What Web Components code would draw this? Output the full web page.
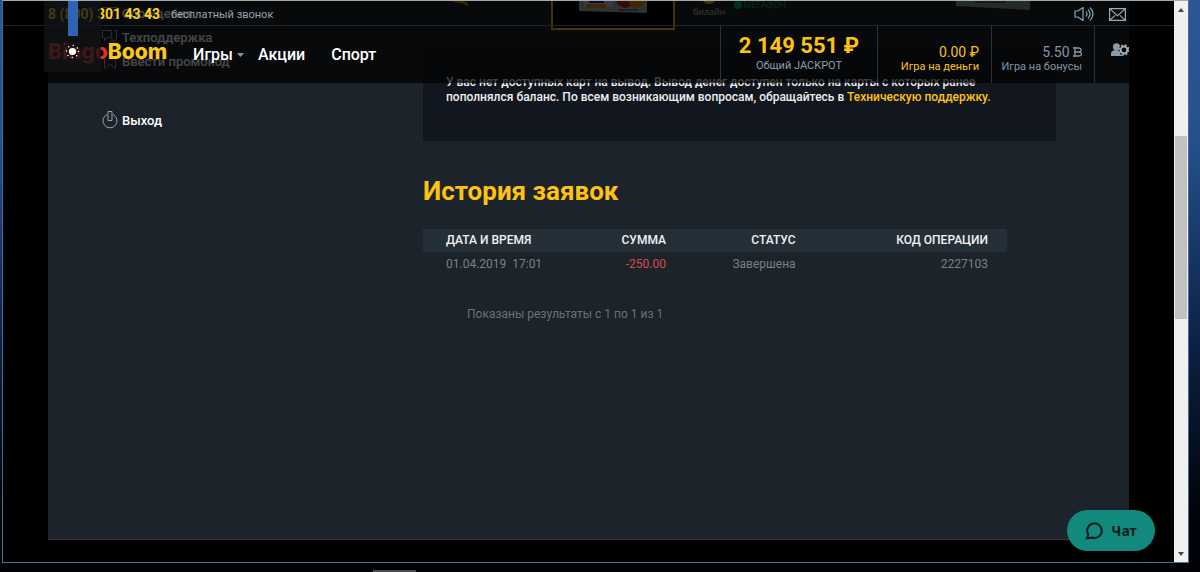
<!DOCTYPE html>
<html lang="ru">
<head>
<meta charset="utf-8">
<title>BingoBoom</title>
<style>
body{margin:0;background:#000;font-family:Roboto,"Open Sans",sans-serif;font-size:13px;line-height:15px;color:#fff}
</style>
</head>
<body>
<desktop-shell></desktop-shell>
<script>
const define = (name, html) => {
  const t = document.createElement('template');
  t.innerHTML = `<style>*{box-sizing:border-box}a{color:inherit;text-decoration:none}button{font:inherit;color:inherit;background:none;border:0;padding:0;cursor:pointer}svg{display:block;flex:none}</style>` + html;
  customElements.define(name, class extends HTMLElement {
    constructor(){ super(); this.attachShadow({mode:'open'}).appendChild(t.content.cloneNode(true)); }
  });
};

define('side-link', `
<style>
:host{display:block}
a{display:flex;align-items:center;gap:4px;height:24px;font-weight:500;font-size:13px}
::slotted(svg){display:block;flex:none}
</style>
<a href="#"><slot name="icon"></slot><slot></slot></a>`);

define('side-menu', `
<style>
:host{display:block;padding-left:54px}
side-link{color:#fff}
.exit{margin-top:35px}
svg{fill:none;stroke:#98a0a6;stroke-width:1}
</style>
<nav aria-label="Профиль">
<side-link><svg slot="icon" width="16" height="16" viewBox="0 0 16 16"><path d="M.5 2.5h15v11H.5zM.5 2.5 8 9l7.500-6.500"/></svg>Сообщения</side-link>
<side-link><svg slot="icon" width="16" height="16" viewBox="0 0 16 16"><path d="M.5 1.500h9v7h-4l-3 3v-3h-2zM11.500 1.500h3v8.500l-3 4v-3h-4"/></svg>Техподдержка</side-link>
<side-link><svg slot="icon" width="16" height="16" viewBox="0 0 16 16"><path d="M2.500.5h11v15L8 11l-5.500 4.500z"/></svg>Ввести промокод</side-link>
<side-link class="exit"><svg slot="icon" width="16" height="18" viewBox="0 0 16 18"><path d="M5 3.500a7 7 0 1 0 6 0M6 .5h4v9H6z"/></svg>Выход</side-link>
</nav>`);

define('pay-methods', `
<style>
:host{display:grid;grid-template-columns:repeat(5,1fr);gap:1px;height:47px;justify-items:center}
.pick{width:124px;height:29px;border:2px solid #ecb90c;border-top:0;background:#000;display:flex;justify-content:center;align-items:flex-start}
.group{display:flex;gap:8px;font-size:9px;line-height:10px;color:#c8c8c8}
.bee{display:flex;flex-direction:column;align-items:center;gap:3px;font-family:"Open Sans",sans-serif}
.mega{color:#00a659;display:flex;gap:2px;align-items:center;height:8px}
</style>
<svg width="80" height="20" viewBox="0 0 80 20"><path d="M7 0c4 1 9 0 15 4-4-5-8-5-12-4z" fill="#d27a16" stroke="#d27a16" stroke-width="2"/></svg>
<div class="pick"><svg width="68" height="12" viewBox="0 0 68 12"><path d="M0 0h68v12L0 10z" fill="#a5bac2"/><path d="M5 0h29v5H5z" fill="#d6d8e4"/><path d="M7 3h20v4H7z" fill="#db9318"/><path d="M10 0h15v2H10z" fill="#28307c"/><circle cx="46" cy="-2" r="9" fill="#c62e1e"/><circle cx="58" cy="-2" r="9" fill="#e48922"/><path d="M39 9h20" stroke="#37343b"/></svg></div>
<div class="group"><span class="bee"><svg width="12" height="3" viewBox="0 0 12 3"><path d="M0 0h12q-2 3-6 3T0 0" fill="#f5bd25"/></svg><span>билайн</span></span><span class="mega"><svg width="8" height="8"><circle cx="4" cy="4" r="4" fill="#00b35a"/></svg>МЕГАФОН</span></div>
<span></span>
<svg width="74" height="9" viewBox="0 0 74 9"><path d="M0 0h74v9L0 5z" fill="#7f9c99"/><path d="M19 0h31v2H19z" fill="#50605e"/></svg>`);

define('notice-box', `
<style>
:host{display:block;background:#12171f;padding:27px 23px 36px}
p{margin:0;font-weight:500;font-size:12px;line-height:15px;color:#eee}
a{color:#ffc211}
</style>
<p>У вас нет доступных карт на вывод. Вывод денег доступен только на карты с которых ранее<br>пополнялся баланс. По всем возникающим вопросам, обращайтесь в <a href="#">Техническую поддержку.</a></p>`);

define('request-history', `
<style>
:host{display:block;padding-top:34px}
h2{margin:0 0 22px;font-size:26px;line-height:32px;font-weight:700;color:#ffc211}
.wrap{padding-right:49px}
table{width:100%;border-collapse:collapse;table-layout:fixed;font-size:12px}
th{height:23px;padding:0;background:#252f38;font-weight:500;text-transform:uppercase;color:#f2f2f2;text-align:right}
td{height:24px;padding:0;color:#7c8083;text-align:right;white-space:pre}
th:first-child,td:first-child{text-align:left;padding-left:23px}
th:last-child,td:last-child{padding-right:19px}
td.neg{color:#d94b4b}
p{margin:30px 44px 0;font-size:12px;line-height:16px;color:#6d7174}
</style>
<h2>История заявок</h2>
<div class="wrap"><table>
<colgroup><col style="width:25%"><col style="width:16.600%"><col style="width:22.200%"><col></colgroup>
<thead><tr><th>Дата и время</th><th>Сумма</th><th>Статус</th><th>Код операции</th></tr></thead>
<tbody><tr><td>01.04.2019  17:01</td><td class="neg">-250.00</td><td>Завершена</td><td>2227103</td></tr></tbody>
</table></div>
<p>Показаны результаты с 1 по 1 из 1</p>`);

define('balance-cell', `
<style>
:host{display:flex;flex-direction:column;justify-content:flex-end;border-left:1px solid #2a3139;padding:0 12px 10px 0;text-align:right;white-space:nowrap}
.v{font-size:14px;line-height:16px}
.l{font-size:11px;line-height:13px}
</style>
<span class="v"><slot name="value"></slot></span><span class="l"><slot></slot></span>`);

define('site-header', `
<style>
:host{display:block;background:rgba(0,0,0,.72);padding:0 45px}
.top{height:25px;margin:0 -45px;padding:2px 48px 0 45px;border-bottom:1px solid #202428;display:flex;align-items:center}
.phone{font-size:14px;font-weight:700;color:#ffd21c;margin-right:11px}
.free{font-size:11px;color:#98a4ae;flex:1}
.top button+button{margin-left:15px}
.main{height:57px;display:flex}
.logo{font:800 21px/52px Inter,Roboto,sans-serif;color:#fbc81a;margin-right:26px}
.logo b{font-weight:800;color:#e62e25}
nav{display:flex;flex:1;font-size:16px;font-weight:500;line-height:57px}
nav a{display:flex;align-items:center;gap:4px}
nav a+a{margin-left:14px}
nav a+a+a{margin-left:26px}
.jack{border-left:1px solid #2a3139;width:157px;display:flex;flex-direction:column;align-items:center;padding-top:6px}
.jack strong{font-size:22px;line-height:28px;color:#ffc211;font-weight:700}
.jack span{font-size:11px;line-height:12px;color:#8f9fb0}
.money{color:#ffc211;width:114px}
.bonus{color:#8395a5;width:103px}
.user{border-left:1px solid #2a3139;width:35px;overflow:hidden;display:flex;padding:17px 0 0 16px;align-items:flex-start}
</style>
<div class="top"><a class="phone" href="tel:88003014343">8 (800) 301 43 43</a><span class="free">бесплатный звонок</span>
<button aria-label="Звук"><svg width="20" height="14" viewBox="0 0 20 14" fill="none" stroke="#83a9bc" stroke-width="1.200"><path d="M1 4h3l5-3.500v13L4 10H1zM12 4.500q2 2.500 0 5M14 2.500q4 4.500 0 9M16 .5q6 6.500 0 13"/></svg></button>
<button aria-label="Почта"><svg width="17" height="13" viewBox="0 0 17 13" fill="none" stroke="#9caab4" stroke-width="1.200"><path d="M.6.6h15.800v11.800H.6zl7.900 7 7.900-7M.6 12.400l5.500-5M16.400 12.400l-5.500-5"/></svg></button></div>
<div class="main"><a class="logo" href="#"><b>Bingo</b>Boom</a>
<nav aria-label="Главное меню"><a href="#">Игры<svg width="7" height="4" viewBox="0 0 7 4"><path d="M0 0h7L3.500 4z" fill="#8b939a"/></svg></a><a href="#">Акции</a><a href="#">Спорт</a></nav>
<div class="jack"><strong>2 149 551 ₽</strong><span>Общий JACKPOT</span></div>
<balance-cell class="money"><span slot="value">0.00 ₽</span>Игра на деньги</balance-cell>
<balance-cell class="bonus"><span slot="value">5.50 <svg style="display:inline-block" width="9" height="10" viewBox="0 0 9 10" fill="none" stroke="currentColor" stroke-width="1.300"><path d="M0 1h5.500q2.500 0 2.500 2T5.500 5H1M2 0v10M0 9h5.500q3 0 3-2T5.500 5"/></svg></span>Игра на бонусы</balance-cell>
<button class="user" aria-label="Профиль"><svg width="19" height="14" viewBox="0 0 19 14"><circle cx="5.500" cy="3.800" r="3.600" fill="#8d99a4"/><path d="M0 13V10q1-3 5.500-3t5.500 3v3z" fill="#8d99a4"/><circle cx="13" cy="7" r="5.500" fill="#07090b"/><circle cx="13" cy="7" r="3.400" fill="none" stroke="#a3afb9" stroke-width="2"/><circle cx="13" cy="7" r="4.900" fill="none" stroke="#a3afb9" stroke-width="1.600" stroke-dasharray="2 1.850"/></svg></button></div>`);

define('brightness-osd', `
<style>
:host{display:flex;flex-direction:column;align-items:center;width:57px;height:71px;background:rgba(18,19,20,.8)}
.bar{width:10px;height:35px;background:#2f63b4;margin-bottom:8px}
</style>
<div class="bar"></div>
<svg width="15" height="15" viewBox="0 0 15 15"><circle cx="7.500" cy="7.500" r="3.600" fill="#fff"/><circle cx="7.500" cy="7.500" r="6" fill="none" stroke="#fff" stroke-width="1.500" stroke-linecap="round" stroke-dasharray="0 4.712"/></svg>`);

define('chat-button', `
<style>
:host{display:block}
button{display:flex;align-items:center;justify-content:center;gap:8px;width:88px;height:41px;border-radius:21px;background:#118a7d;color:#0c1a1b;font:700 14px/20px "Noto Sans","Open Sans",sans-serif}
</style>
<button><svg width="18" height="18" viewBox="0 0 18 18" fill="none" stroke="currentColor" stroke-width="2"><path d="M3 12A7.300 7.300 0 1 1 7 15.500L1.500 16.500Q3.500 14.500 3 12z" stroke-linejoin="round"/></svg>Чат</button>`);

define('scroll-bar', `
<style>
:host{display:flex;flex-direction:column;width:14px;background:#f0f0f0;padding:0 1px}
i{display:flex;height:17px;align-items:center;justify-content:center}
.before{flex:118}.thumb{flex:184;background:#c1c1c1}.after{flex:226}
</style>
<i><svg width="6" height="4"><path d="M0 4h6L3 0z" fill="#444"/></svg></i><div class="before"></div><div class="thumb"></div><div class="after"></div><i><svg width="6" height="4"><path d="M0 0h6L3 4z" fill="#444"/></svg></i>`);

define('account-page', `
<style>
:host{display:grid;grid-template-columns:375px 1fr;align-items:start;background:#1c232a;border-bottom:1px solid #343b3f;padding-right:73px}
</style>
<side-menu></side-menu>
<main><pay-methods></pay-methods><notice-box></notice-box><request-history></request-history></main>`);

define('desktop-shell', `
<style>
:host{display:flex;flex-direction:column;min-height:100vh;background:linear-gradient(#2c5794,#24508c 25%,#0d2144 60%,#020306 90%)}
.window{flex:1;display:flex;margin:0 11px 0 2px;border:1px solid #4b6b9d;border-top-color:#a4a9aa}
.view{flex:1;position:relative;display:flex;background:#000;padding:0 45px 22px}
account-page{flex:1}
site-header{position:absolute;top:0;left:0;right:0}
brightness-osd{position:absolute;top:0;left:41px}
chat-button{position:absolute;right:19px;bottom:11px}
.task{height:9px;background:#030306;display:flex;align-items:flex-end;padding-left:373px}
.task i{width:43px;height:2px;background:#4b4b4d}
</style>
<div class="window"><div class="view"><account-page></account-page><site-header></site-header><brightness-osd></brightness-osd><chat-button></chat-button></div><scroll-bar></scroll-bar></div>
<div class="task"><i></i></div>`);
</script>
</body>
</html>
